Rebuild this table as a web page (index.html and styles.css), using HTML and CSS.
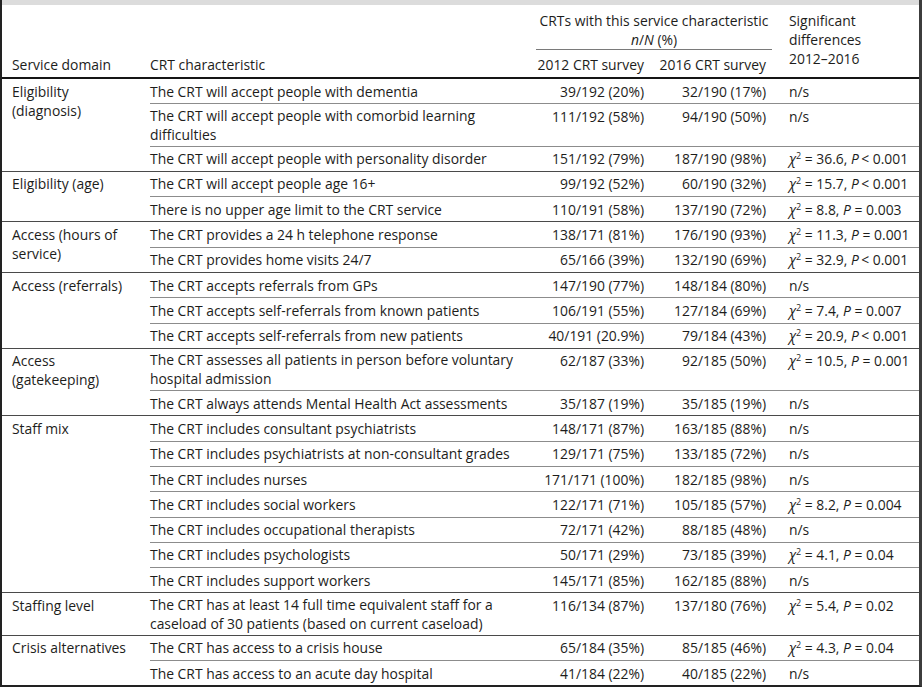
FILE: index.html
```html
<!DOCTYPE html>
<html lang="en">
<head>
<meta charset="utf-8">
<title>CRT service characteristics 2012–2016</title>
<link rel="stylesheet" href="styles.css">
</head>
<body>
<div class="frame">
  <div class="topbar"></div>
  <table class="crt">
    <colgroup>
      <col class="c-domain">
      <col class="c-char">
      <col class="c-y12">
      <col class="c-y16">
      <col class="c-sig">
    </colgroup>
    <thead>
      <tr>
        <th class="h-domain" rowspan="2">Service domain</th>
        <th class="h-char" rowspan="2">CRT characteristic</th>
        <th class="h-span" colspan="2">CRTs with this service characteristic<br><i>n</i>/<i>N</i> (%)</th>
        <th class="h-sig" rowspan="2">Significant<br>differences<br>2012–2016</th>
      </tr>
      <tr>
        <th class="h-year">2012 CRT survey</th>
        <th class="h-year">2016 CRT survey</th>
      </tr>
    </thead>
    <tbody>
      <tr>
        <td class="dom grp ml" rowspan="3">Eligibility<br>(diagnosis)</td>
        <td class="ch">The CRT will accept people with dementia</td>
        <td class="n">39/192 (20%)</td><td class="n">32/190 (17%)</td><td class="s">n/s</td>
      </tr>
      <tr>
        <td class="ch ml2">The CRT will accept people with comorbid learning<br>difficulties</td>
        <td class="n">111/192 (58%)</td><td class="n">94/190 (50%)</td><td class="s">n/s</td>
      </tr>
      <tr class="last">
        <td class="ch">The CRT will accept people with personality disorder</td>
        <td class="n">151/192 (79%)</td><td class="n">187/190 (98%)</td><td class="s"><span class="chi">χ</span><sup>2</sup> = 36.6, <i>P</i>&thinsp;&lt; 0.001</td>
      </tr>

      <tr>
        <td class="dom grp" rowspan="2">Eligibility (age)</td>
        <td class="ch">The CRT will accept people age 16+</td>
        <td class="n">99/192 (52%)</td><td class="n">60/190 (32%)</td><td class="s"><span class="chi">χ</span><sup>2</sup> = 15.7, <i>P</i>&thinsp;&lt; 0.001</td>
      </tr>
      <tr class="last">
        <td class="ch">There is no upper age limit to the CRT service</td>
        <td class="n">110/191 (58%)</td><td class="n">137/190 (72%)</td><td class="s"><span class="chi">χ</span><sup>2</sup> = 8.8, <i>P</i> = 0.003</td>
      </tr>

      <tr>
        <td class="dom grp ml" rowspan="2">Access (hours of<br>service)</td>
        <td class="ch">The CRT provides a 24 h telephone response</td>
        <td class="n">138/171 (81%)</td><td class="n">176/190 (93%)</td><td class="s"><span class="chi">χ</span><sup>2</sup> = 11.3, <i>P</i> = 0.001</td>
      </tr>
      <tr class="last">
        <td class="ch">The CRT provides home visits 24/7</td>
        <td class="n">65/166 (39%)</td><td class="n">132/190 (69%)</td><td class="s"><span class="chi">χ</span><sup>2</sup> = 32.9, <i>P</i>&thinsp;&lt; 0.001</td>
      </tr>

      <tr>
        <td class="dom grp" rowspan="3">Access (referrals)</td>
        <td class="ch">The CRT accepts referrals from GPs</td>
        <td class="n">147/190 (77%)</td><td class="n">148/184 (80%)</td><td class="s">n/s</td>
      </tr>
      <tr>
        <td class="ch">The CRT accepts self-referrals from known patients</td>
        <td class="n">106/191 (55%)</td><td class="n">127/184 (69%)</td><td class="s"><span class="chi">χ</span><sup>2</sup> = 7.4, <i>P</i> = 0.007</td>
      </tr>
      <tr class="last">
        <td class="ch">The CRT accepts self-referrals from new patients</td>
        <td class="n">40/191 (20.9%)</td><td class="n">79/184 (43%)</td><td class="s"><span class="chi">χ</span><sup>2</sup> = 20.9, <i>P</i>&thinsp;&lt; 0.001</td>
      </tr>

      <tr>
        <td class="dom grp ml" rowspan="2">Access<br>(gatekeeping)</td>
        <td class="ch ml2">The CRT assesses all patients in person before voluntary<br>hospital admission</td>
        <td class="n">62/187 (33%)</td><td class="n">92/185 (50%)</td><td class="s"><span class="chi">χ</span><sup>2</sup> = 10.5, <i>P</i> = 0.001</td>
      </tr>
      <tr class="last">
        <td class="ch">The CRT always attends Mental Health Act assessments</td>
        <td class="n">35/187 (19%)</td><td class="n">35/185 (19%)</td><td class="s">n/s</td>
      </tr>

      <tr>
        <td class="dom grp" rowspan="7">Staff mix</td>
        <td class="ch">The CRT includes consultant psychiatrists</td>
        <td class="n">148/171 (87%)</td><td class="n">163/185 (88%)</td><td class="s">n/s</td>
      </tr>
      <tr>
        <td class="ch">The CRT includes psychiatrists at non-consultant grades</td>
        <td class="n">129/171 (75%)</td><td class="n">133/185 (72%)</td><td class="s">n/s</td>
      </tr>
      <tr>
        <td class="ch">The CRT includes nurses</td>
        <td class="n">171/171 (100%)</td><td class="n">182/185 (98%)</td><td class="s">n/s</td>
      </tr>
      <tr>
        <td class="ch">The CRT includes social workers</td>
        <td class="n">122/171 (71%)</td><td class="n">105/185 (57%)</td><td class="s"><span class="chi">χ</span><sup>2</sup> = 8.2, <i>P</i> = 0.004</td>
      </tr>
      <tr>
        <td class="ch">The CRT includes occupational therapists</td>
        <td class="n">72/171 (42%)</td><td class="n">88/185 (48%)</td><td class="s">n/s</td>
      </tr>
      <tr>
        <td class="ch">The CRT includes psychologists</td>
        <td class="n">50/171 (29%)</td><td class="n">73/185 (39%)</td><td class="s"><span class="chi">χ</span><sup>2</sup> = 4.1, <i>P</i> = 0.04</td>
      </tr>
      <tr class="last">
        <td class="ch">The CRT includes support workers</td>
        <td class="n">145/171 (85%)</td><td class="n">162/185 (88%)</td><td class="s">n/s</td>
      </tr>

      <tr class="last">
        <td class="dom grp">Staffing level</td>
        <td class="ch ml2">The CRT has at least 14 full time equivalent staff for a<br>caseload of 30 patients (based on current caseload)</td>
        <td class="n">116/134 (87%)</td><td class="n">137/180 (76%)</td><td class="s"><span class="chi">χ</span><sup>2</sup> = 5.4, <i>P</i> = 0.02</td>
      </tr>

      <tr>
        <td class="dom end" rowspan="2">Crisis alternatives</td>
        <td class="ch">The CRT has access to a crisis house</td>
        <td class="n">65/184 (35%)</td><td class="n">85/185 (46%)</td><td class="s"><span class="chi">χ</span><sup>2</sup> = 4.3, <i>P</i> = 0.04</td>
      </tr>
      <tr class="final">
        <td class="ch">The CRT has access to an acute day hospital</td>
        <td class="n">41/184 (22%)</td><td class="n">40/185 (22%)</td><td class="s">n/s</td>
      </tr>
    </tbody>
  </table>
</div>
</body>
</html>
```

FILE: styles.css
```css
html, body {
  margin: 0;
  padding: 0;
  background: #ffffff;
}

body {
  font-family: "Open Sans", "Noto Sans", "DejaVu Sans", sans-serif;
  font-size: 13.9px;
  line-height: 17px;
  color: #1d1d1b;
}

.frame {
  width: 917px;
  border-left: 2px solid #222222;
  border-right: 3px solid #3c3c3c;
  border-bottom: 2px solid #222222;
}

.topbar {
  height: 5px;
  background: #dcdcdc;
}

.crt {
  width: 917px;
  table-layout: fixed;
  border-collapse: separate;
  border-spacing: 0;
}

.c-domain { width: 148px; }
.c-char { width: 386px; }
.c-y12 { width: 114px; }
.c-y16 { width: 122px; }
.c-sig { width: 147px; }

.crt th {
  font-weight: normal;
  text-align: left;
  white-space: nowrap;
}

.h-domain,
.h-char {
  vertical-align: bottom;
  padding: 0 0 4px 0;
  border-bottom: 2px solid #151515;
}

.h-domain {
  padding-left: 10px;
}

.h-span {
  text-align: center !important;
  vertical-align: top;
  line-height: 19px;
  padding: 6px 0 0 0;
  border-bottom: 1px solid #7a7a7a;
}

.h-sig {
  vertical-align: top;
  line-height: 19px;
  padding: 6px 0 0 17px;
  border-bottom: 2px solid #151515;
}

.h-year {
  text-align: right !important;
  padding: 6px 6px 4px 0;
  border-bottom: 2px solid #151515;
}

.crt td {
  vertical-align: top;
  padding: 3.65px 0;
  white-space: nowrap;
  border-bottom: 1px solid #8c8c8c;
}

.crt td.ml {
  line-height: 19px;
  padding-top: 2.65px;
}

.crt td.ml2 {
  line-height: 19px;
  padding: 1.65px 0;
}

.crt td.dom {
  padding-left: 10px;
}

.crt td.dom.grp {
  border-bottom: 1px solid #4a4a4a;
}

.crt td.dom.end,
.crt tr.final td {
  border-bottom: none;
}

.crt tr.last td {
  border-bottom: 1px solid #4a4a4a;
}

.crt td.n {
  text-align: right;
  padding-right: 6px;
}

.crt td.s {
  padding-left: 17px;
}

.chi {
  font-style: italic;
}

sup {
  font-size: 9px;
  line-height: 0;
  vertical-align: 5px;
}
```
